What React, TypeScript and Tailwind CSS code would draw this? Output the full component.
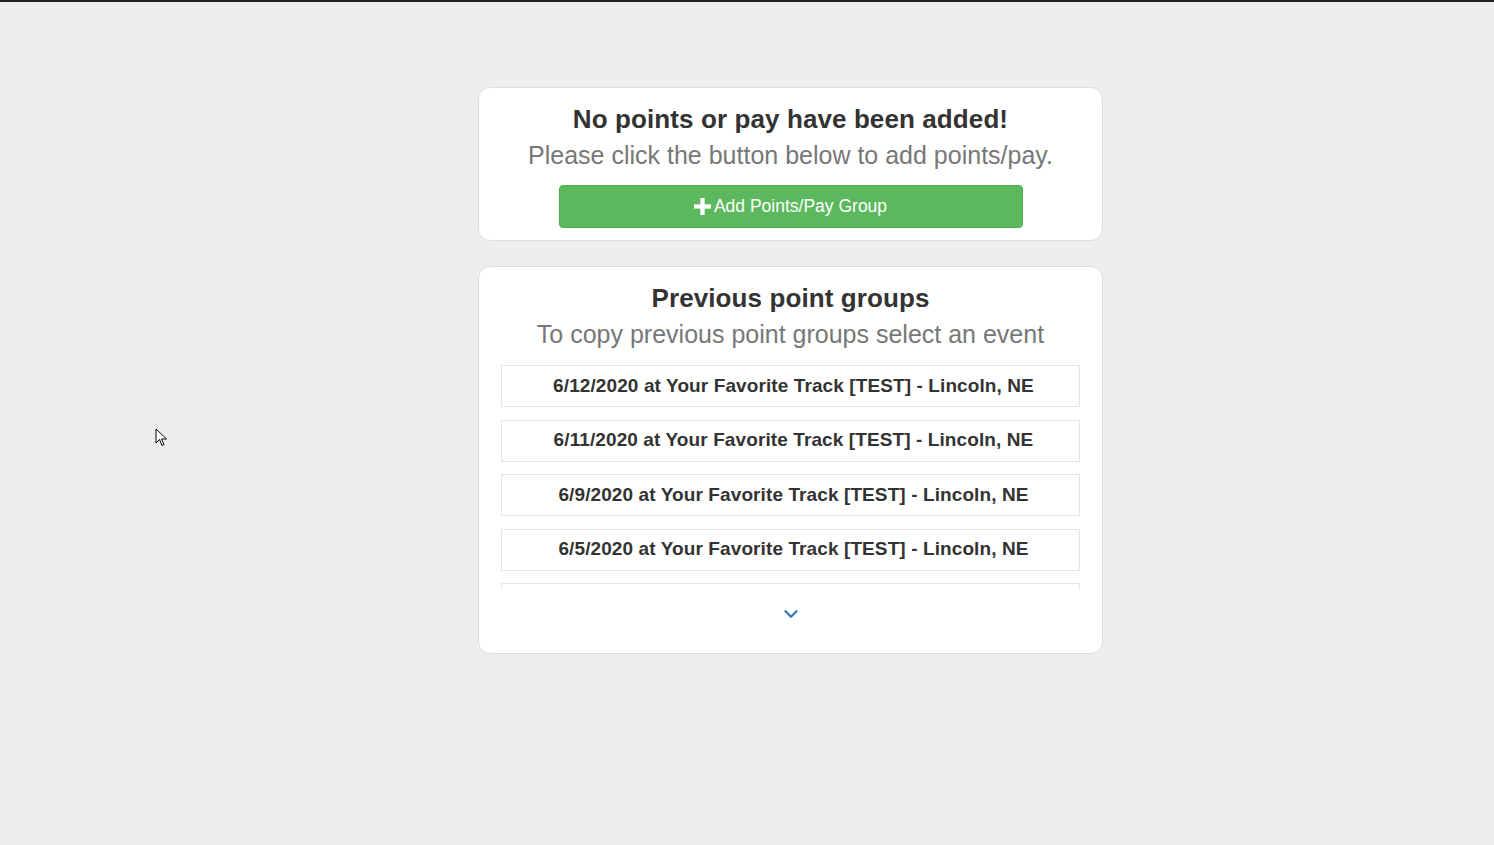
import { ChevronDown } from "lucide-react";

const events = [
  "6/12/2020 at Your Favorite Track [TEST] - Lincoln, NE",
  "6/11/2020 at Your Favorite Track [TEST] - Lincoln, NE",
  "6/9/2020 at Your Favorite Track [TEST] - Lincoln, NE",
  "6/5/2020 at Your Favorite Track [TEST] - Lincoln, NE",
  "6/3/2020 at Your Favorite Track [TEST] - Lincoln, NE",
];

const PointsPage = () => {
  return (
    <div
      className="relative min-h-screen bg-[#eeeeee] border-t-2 border-[#222222]"
      style={{ fontFamily: '"Liberation Sans", Arial, sans-serif' }}
    >
      <div className="pl-[478px] pt-[85px] flex flex-col gap-[25px]">
        <div className="w-[625px] bg-white border border-[#dddddd] rounded-[12px] px-[22px] pt-[13px] pb-[12px] text-center">
          <h3 className="text-[26px] leading-[36px] font-bold text-[#333333] tracking-[0.1px]">
            No points or pay have been added!
          </h3>
          <p className="text-[25px] leading-[36px] text-[#777777]">
            Please click the button below to add points/pay.
          </p>
          <div className="flex justify-center mt-[12px]">
            <button className="w-[464px] h-[43px] bg-[#5cb85c] border border-[#4cae4c] rounded-[4px] text-white text-[17.5px] flex items-center justify-center gap-[3px]">
              <svg width="17" height="17" viewBox="0 0 16 16" className="mb-[1px]">
                <rect x="6" y="0" width="4" height="16" fill="white" />
                <rect x="0" y="6" width="16" height="4" fill="white" />
              </svg>
              Add Points/Pay Group
            </button>
          </div>
        </div>

        <div className="w-[625px] bg-white border border-[#dddddd] rounded-[12px] px-[22px] pt-[13px] pb-[28px] text-center">
          <h3 className="text-[26px] leading-[36px] font-bold text-[#333333] tracking-[0.1px]">
            Previous point groups
          </h3>
          <p className="text-[25px] leading-[36px] text-[#777777]">
            To copy previous point groups select an event
          </p>
          <div className="mt-[13px] h-[225px] overflow-hidden">
            {events.map((ev) => (
              <div
                key={ev}
                className="h-[42px] mb-[12.5px] pl-[6px] border border-[#e5e5e5] flex items-center justify-center text-[19px] font-bold text-[#333333] tracking-[0.1px]"
              >
                {ev}
              </div>
            ))}
          </div>
          <div className="flex justify-center mt-[13px]">
            <ChevronDown className="text-[#337ab7]" size={22} strokeWidth={2.6} />
          </div>
        </div>
      </div>

      <svg
        className="absolute left-[155px] top-[426px]"
        width="14"
        height="20"
        viewBox="0 0 14 20"
      >
        <path
          d="M1 1 L1 15 L4.5 11.5 L7 17.5 L9 16.5 L6.5 11 L11.5 11 Z"
          fill="white"
          stroke="black"
          strokeWidth="1"
        />
      </svg>
    </div>
  );
};

export default PointsPage;
